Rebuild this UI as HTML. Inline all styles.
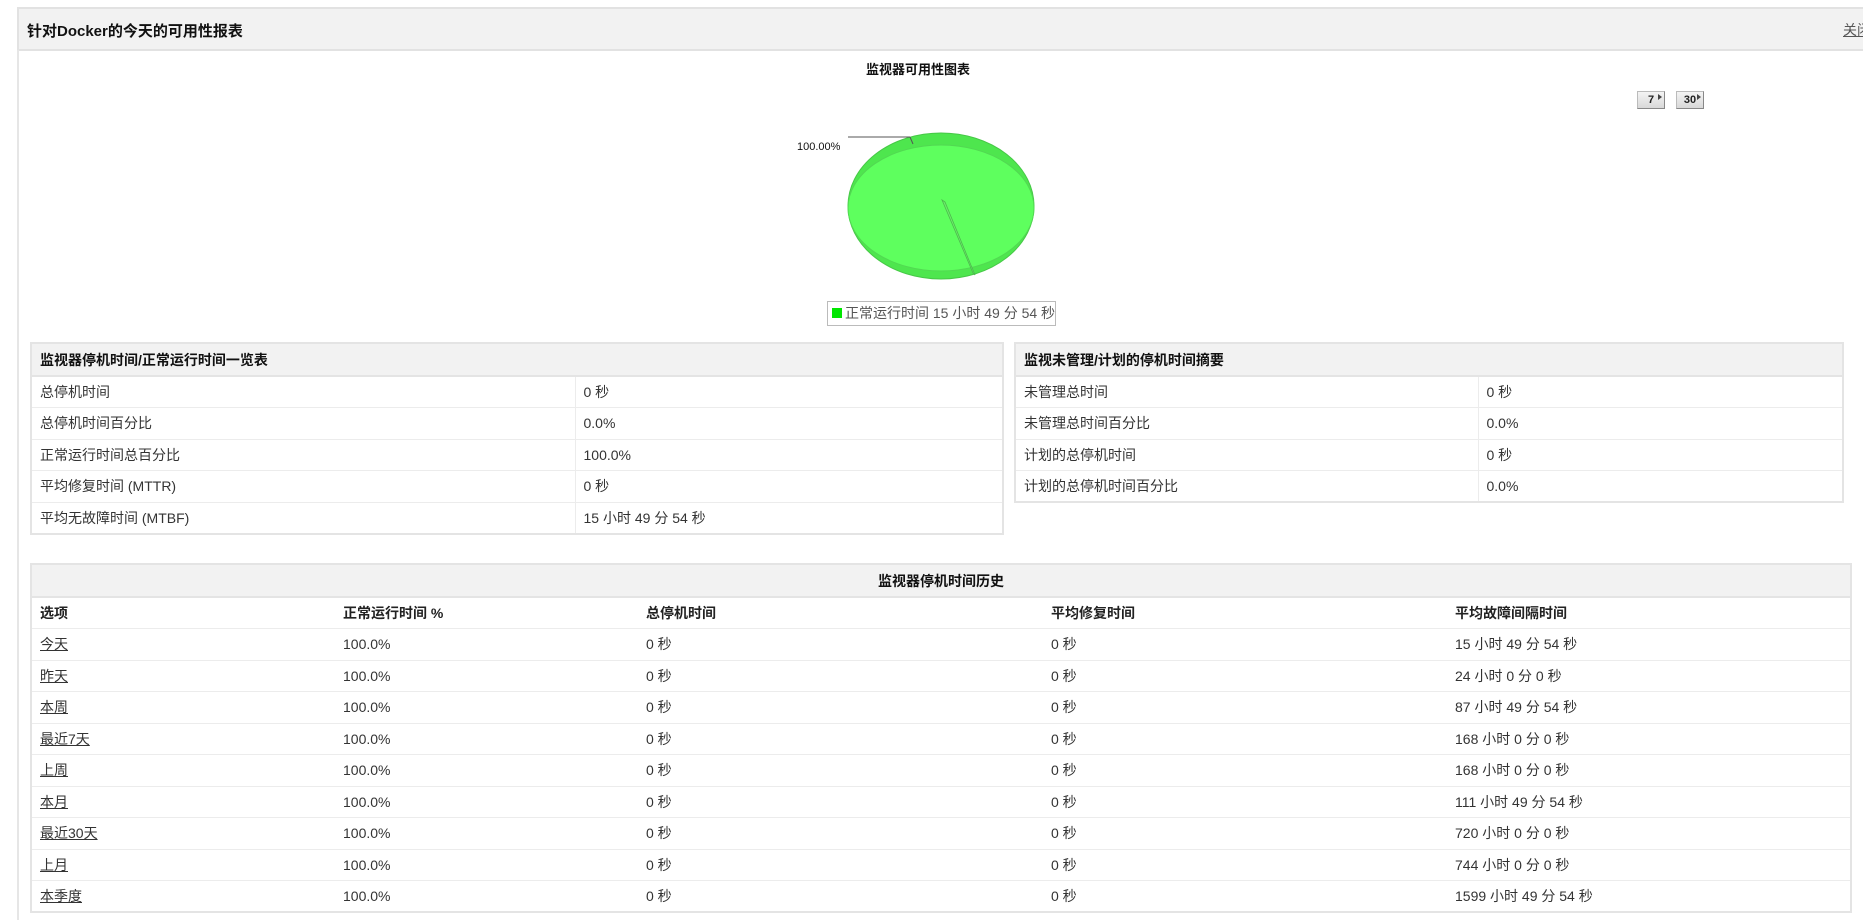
<!DOCTYPE html>
<html><head><meta charset="utf-8">
<style>
*{margin:0;padding:0;box-sizing:border-box}
body{width:1863px;height:920px;background:#fff;font-family:"Liberation Sans","Noto Sans CJK SC",sans-serif;font-size:14px;color:#333;position:relative;overflow:hidden}
.abs{position:absolute}
#hdr{left:17px;top:7px;width:1846px;height:44px;background:#f2f2f2;border-top:2px solid #e2e2e2;border-bottom:2px solid #e2e2e2;border-left:2px solid #e2e2e2}
#hdr b{position:absolute;left:8px;top:11px;font-size:15px;color:#111}
#hdr a{position:absolute;left:1824px;top:11px;color:#555;text-decoration:underline;font-size:14px;white-space:nowrap}
#vline{left:17px;top:50px;width:2px;height:870px;background:#e6e6e6}
table{border-collapse:collapse;position:absolute;border:2px solid #e4e4e4;table-layout:fixed}
td,th{border-bottom:1px solid #ececec;height:31.5px;padding:0 8px;text-align:left;font-weight:normal;white-space:nowrap}
th.h{background:#f2f2f2;font-weight:bold;color:#111;height:33px;border-bottom:2px solid #e4e4e4}
td.c{border-left:1px solid #ececec}
.hist td.b{font-weight:bold;color:#222}
a.u{color:#333;text-decoration:underline}
.btn{position:absolute;top:91px;height:18px;background:linear-gradient(#f4f4f4,#d8d8d8);border:1px solid #bbb;border-right-color:#888;border-bottom-color:#888;font:bold 11px "Liberation Sans",sans-serif;color:#222;text-align:center;line-height:16px}
.btn i{position:absolute;right:2px;top:2px;width:0;height:0;border-left:4px solid #444;border-top:3px solid transparent;border-bottom:3px solid transparent}
</style></head><body>
<div id="hdr" class="abs"><b>针对Docker的今天的可用性报表</b><a>关闭</a></div>
<div id="vline" class="abs"></div>
<div class="abs" style="left:0;width:1836px;top:59px;text-align:center;font-weight:bold;font-size:13px;color:#111">监视器可用性图表</div>
<div class="btn" style="left:1637px;width:28px">7 <i></i></div>
<div class="btn" style="left:1676px;width:28px">30 <i></i></div>
<svg class="abs" style="left:780px;top:110px" width="300" height="220">
<ellipse cx="161" cy="96" rx="93" ry="73" fill="#4ee64e" stroke="#46c846" stroke-width="1"/>
<ellipse cx="161" cy="98" rx="93" ry="63" fill="#5eff5e" stroke="#52d852" stroke-width="1"/>
<polygon points="162,90 165,92 195,165 193,163" fill="#6aef6a" stroke="#4cb84c" stroke-width="0.8"/>
<line x1="68" y1="27" x2="130" y2="27" stroke="#555" stroke-width="1"/>
<line x1="130" y1="27" x2="133" y2="34" stroke="#555" stroke-width="1"/>
<text x="17" y="40" font-family="Liberation Sans,sans-serif" font-size="11" fill="#111">100.00%</text>
</svg>
<div class="abs" style="left:827px;top:301px;width:229px;height:25px;border:1px solid #bbb;font-size:14px;line-height:22px;padding-left:4px;color:#555;white-space:nowrap"><span style="display:inline-block;width:10px;height:10px;background:#00e600;margin-right:3px"></span>正常运行时间 15 小时 49 分 54 秒</div>

<table style="left:30px;top:342px;width:974px">
<colgroup><col style="width:544px"><col></colgroup>
<tr><th class="h" colspan="2">监视器停机时间/正常运行时间一览表</th></tr>
<tr><td>总停机时间</td><td class="c">0 秒</td></tr>
<tr><td>总停机时间百分比</td><td class="c">0.0%</td></tr>
<tr><td>正常运行时间总百分比</td><td class="c">100.0%</td></tr>
<tr><td>平均修复时间 (MTTR)</td><td class="c">0 秒</td></tr>
<tr><td>平均无故障时间 (MTBF)</td><td class="c">15 小时 49 分 54 秒</td></tr>
</table>

<table style="left:1014px;top:342px;width:830px">
<colgroup><col style="width:463px"><col></colgroup>
<tr><th class="h" colspan="2">监视未管理/计划的停机时间摘要</th></tr>
<tr><td>未管理总时间</td><td class="c">0 秒</td></tr>
<tr><td>未管理总时间百分比</td><td class="c">0.0%</td></tr>
<tr><td>计划的总停机时间</td><td class="c">0 秒</td></tr>
<tr><td>计划的总停机时间百分比</td><td class="c">0.0%</td></tr>
</table>

<table class="hist" style="left:30px;top:563px;width:1822px">
<colgroup><col style="width:304px"><col style="width:303px"><col style="width:405px"><col style="width:404px"><col></colgroup>
<tr><th class="h" colspan="5" style="text-align:center">监视器停机时间历史</th></tr>
<tr><td class="b">选项</td><td class="b">正常运行时间 %</td><td class="b">总停机时间</td><td class="b">平均修复时间</td><td class="b">平均故障间隔时间</td></tr>
<tr><td><a class="u">今天</a></td><td>100.0%</td><td>0 秒</td><td>0 秒</td><td>15 小时 49 分 54 秒</td></tr>
<tr><td><a class="u">昨天</a></td><td>100.0%</td><td>0 秒</td><td>0 秒</td><td>24 小时 0 分 0 秒</td></tr>
<tr><td><a class="u">本周</a></td><td>100.0%</td><td>0 秒</td><td>0 秒</td><td>87 小时 49 分 54 秒</td></tr>
<tr><td><a class="u">最近7天</a></td><td>100.0%</td><td>0 秒</td><td>0 秒</td><td>168 小时 0 分 0 秒</td></tr>
<tr><td><a class="u">上周</a></td><td>100.0%</td><td>0 秒</td><td>0 秒</td><td>168 小时 0 分 0 秒</td></tr>
<tr><td><a class="u">本月</a></td><td>100.0%</td><td>0 秒</td><td>0 秒</td><td>111 小时 49 分 54 秒</td></tr>
<tr><td><a class="u">最近30天</a></td><td>100.0%</td><td>0 秒</td><td>0 秒</td><td>720 小时 0 分 0 秒</td></tr>
<tr><td><a class="u">上月</a></td><td>100.0%</td><td>0 秒</td><td>0 秒</td><td>744 小时 0 分 0 秒</td></tr>
<tr><td><a class="u">本季度</a></td><td>100.0%</td><td>0 秒</td><td>0 秒</td><td>1599 小时 49 分 54 秒</td></tr>
</table>
</body></html>
